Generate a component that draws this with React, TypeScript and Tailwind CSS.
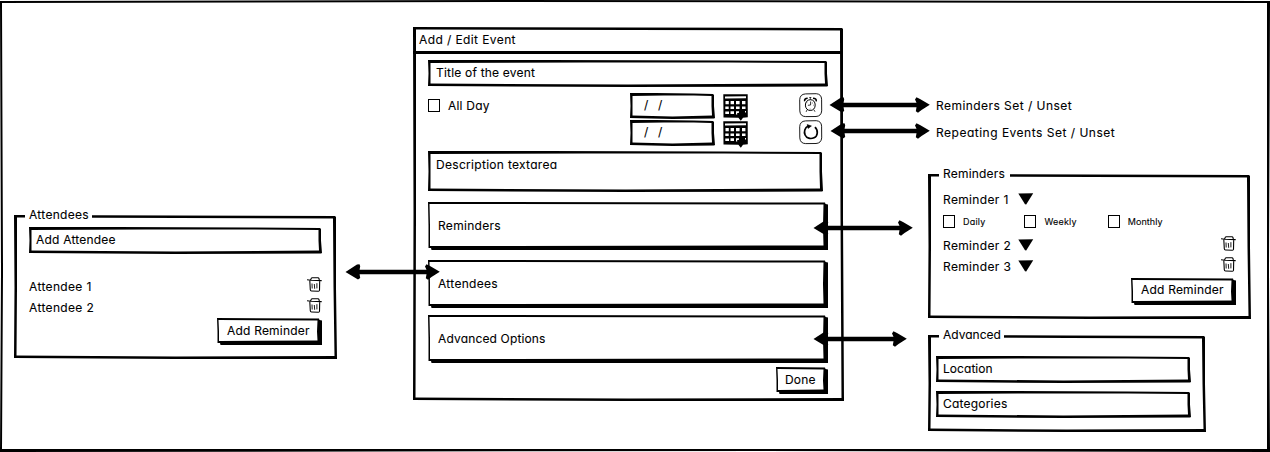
import type { ReactNode } from "react";

const shapes = {
  page: {
    outer: "[clip-path:polygon(0_1px,40%_0,100%_1px,calc(100%_-_1px)_60%,100%_100%,60%_calc(100%_-_1px),0_100%,1px_60%)]",
    inner: "[clip-path:polygon(2px_3px,40%_2px,calc(100%_-_3px)_3px,calc(100%_-_3px)_calc(100%_-_3px),2px_calc(100%_-_3px),3px_60%)]",
  },
  panel: {
    outer: "[clip-path:polygon(0_0,50%_0.5px,calc(100%_-_2px)_1px,calc(100%_-_1px)_2px,calc(100%_-_1px)_50%,100%_100%,50%_100%,0_calc(100%_-_1px),0.5px_50%)]",
    inner: "[clip-path:polygon(3px_2.5px,50%_3px,calc(100%_-_4px)_3.5px,calc(100%_-_3.5px)_50%,calc(100%_-_2.5px)_calc(100%_-_3px),50%_calc(100%_-_2.5px),2.5px_calc(100%_-_3.5px),3px_50%)]",
  },
  field: {
    outer: "[clip-path:polygon(0_0,30%_0,75%_0.5px,calc(100%_-_2px)_1px,calc(100%_-_1px)_2px,calc(100%_-_1px)_50%,100%_calc(100%_-_1px),calc(100%_-_1px)_calc(100%_-_0.5px),50%_100%,0_calc(100%_-_1px),0.5px_50%)]",
    inner: "[clip-path:polygon(2.5px_3px,40%_2.5px,75%_2.5px,calc(100%_-_3.5px)_3px,calc(100%_-_3.5px)_50%,calc(100%_-_3px)_calc(100%_-_3.5px),50%_calc(100%_-_2.5px),2.5px_calc(100%_-_3.5px),2.5px_50%)]",
  },
  button: {
    outer: "[clip-path:polygon(0_0,calc(100%_-_3px)_0.5px,calc(100%_-_2.5px)_2px,100%_2.5px,100%_100%,3.5px_100%,3px_calc(100%_-_2px),0.5px_calc(100%_-_2px),0.5px_50%)]",
    inner: "[clip-path:polygon(1.5px_2px,calc(100%_-_4.5px)_2.5px,calc(100%_-_5px)_50%,calc(100%_-_4.5px)_calc(100%_-_4.5px),2px_calc(100%_-_4px),2px_50%)]",
  },
};

function Frame({ kind, className, children }: { kind: keyof typeof shapes; className: string; children?: ReactNode }) {
  return (
    <div className={`relative shrink-0 ${className}`}>
      <div className={`absolute inset-0 bg-black ${shapes[kind].outer}`}>
        <div className={`size-full bg-white ${shapes[kind].inner}`} />
      </div>
      <div className="relative size-full">{children}</div>
    </div>
  );
}

function Label({ className = "", children }: { className?: string; children: ReactNode }) {
  return <span className={`block whitespace-pre ${className}`}>{children}</span>;
}

function Legend({ className, children }: { className: string; children: ReactNode }) {
  return <div className={`absolute -top-[7px] left-[11px] z-10 bg-white ${className}`}><Label>{children}</Label></div>;
}

function Check({ className = "" }: { className?: string }) {
  return <span className={`block h-[13px] w-3 shrink-0 border-[1.5px] border-black ${className}`} />;
}

function Trash() {
  return (
    <svg className="shrink-0" width="15" height="15" viewBox="0 0 15 15" fill="none" stroke="black" strokeWidth=".9">
      <path d="M0 2.7 4 3.3l10.7.3M3.6 3 4.4 1.1 5.2.7l6 .1.7.6.5 2M2.8 3.5l.5 9.3q.1 1.2 1.2 1.2l6.9.2q1 0 1.1-1l.2-9.4" strokeWidth="1.1" />
      <path d="m5 6.5.2 5M7.3 7l.4 4.8M9.9 6.2v5.2" />
    </svg>
  );
}

function Calendar() {
  return (
    <svg className="block shrink-0" width="26" height="28" viewBox="0 0 26 28">
      <path d="M.3.3 24.7.2l.1 23-4.8.6-2.2 3-2.4-3.1L.5 23.5Z" fill="black" />
      <g fill="white">
        <path d="M2 2.5 23 2.3v2L2 4.5Z" />
        <path d="M2.5 7H5.8v3.2H2.5ZM7.6 7H11v3.2H7.6Zm5.4 0h3.6v3.2H13Zm6 0h3.4v3.2H19ZM2.3 12.4h3.4V15H2.3Zm5.2 0H11V15H7.5Zm5.5 0h3.6V15H13Zm6 0h3.5V15H19ZM2.3 17.4H6v2.7H2.3Zm5.2-.1H11V20H7.5Zm5.5 0h3v1.4l-2 .6.3 1.1H13Zm9-.2h1v1.3h-1Z" />
      </g>
    </svg>
  );
}

function IconBox({ children }: { children: ReactNode }) {
  return (
    <svg className="block shrink-0" width="24" height="25" viewBox="0 0 24 25" fill="none" stroke="black">
      <path d="M6.5.9 17.3.7q5 .4 5.3 5.5l.1 11.7q-.5 5.3-5.7 5.6l-10.3.1Q1.2 23.5.8 17.9L.7 6.7Q1 1.2 6.5.9Z" strokeWidth=".9" />
      {children}
    </svg>
  );
}

function AlarmIcon() {
  return (
    <IconBox>
      <path d="M11.3 6.7c3.1-.1 4.9 2.3 4.9 5.4s-2 5.4-4.9 5.4-4.9-2.3-4.9-5.4 2-5.3 4.9-5.4Z" strokeWidth="1" />
      <path d="m8.1 16.8-1 2.1m7.8-2.1 1.1 1.9M11.3 4.6v2M10.3 4.5h2M11.6 8.5V12l-2.7.3" strokeWidth=".8" />
      <path d="M13.4 9.6v.8m1 1.8h.7m-3.9 3.5v.8m-3.4-7 .6.6" strokeWidth=".7" />
      <path d="M5.7 8.3Q5 5.5 8.7 5.3M14 5.2q3.7.1 3.2 3.2" strokeWidth="1.6" />
    </IconBox>
  );
}

function RepeatIcon() {
  return (
    <IconBox>
      <path d="M15.9 7.2c3.5 3 3.1 8.8-.9 10.6-3.5 1.5-7.5.4-8.9-2.8-1.5-3.3-.3-7.3 3.1-8.9" strokeWidth="1.7" />
      <path d="m8.2 4.6 4.2 1.4-3.3 2.4Z" fill="black" strokeWidth=".6" />
    </IconBox>
  );
}

function Triangle() {
  return (
    <svg className="shrink-0" width="16" height="12" viewBox="0 0 16 12">
      <path d="M.3.5 15.2.2 8.2 11.4 7 11.3Z" fill="black" />
    </svg>
  );
}

function Arrow({ width, className }: { width: number; className: string }) {
  return (
    <svg className={`absolute z-20 ${className}`} width={width} height="18" viewBox={`0 0 ${width} 18`}>
      <path
        d={`M.5 9 12 1.6 14.5 1.2 15.2 3.2 14.6 6.8H${width - 14.5}L${width - 16} 3.5 ${width - 14.5} 1.2 ${width - 11} 3 ${width - 1.2} 8.7 ${width - 9.5} 13.9 ${width - 13} 16.8 ${width - 15.2} 15.3 ${width - 14.5} 11.2H14.6L15.2 15 13 16.4Z`}
        fill="black"
      />
    </svg>
  );
}

function DateRow({ icon }: { icon: ReactNode }) {
  return (
    <div className="flex h-[27px] items-start">
      <Frame kind="field" className="h-[26px] w-[85px]">
        <Label className="pt-[5px] pl-[14px] tracking-[1px]">/  /</Label>
      </Frame>
      <div className="ml-2 pt-px"><Calendar /></div>
      <div className="ml-[50px]">{icon}</div>
    </div>
  );
}

function Field({ className, text }: { className: string; text: ReactNode }) {
  return <Frame kind="field" className={className}><div className="pt-1.5 pl-[7px]">{text}</div></Frame>;
}

export default function App() {
  return (
    <main className="relative h-[452px] w-[1270px] overflow-hidden bg-white font-['Inter',sans-serif] text-[12px] leading-[14px] tracking-[0.2px] text-black [font-feature-settings:'cv11'] [-webkit-text-stroke:0.1px_black]">
      <Frame kind="page" className="h-[452px] w-[1270px]">
        <div className="flex items-start">
          <Frame kind="panel" className="mt-[215px] ml-[14px] h-[144px] w-[323px]">
            <Legend className="w-[67px] pl-1 tracking-[0.3px]">Attendees</Legend>
            <div className="flex flex-col pt-3 pl-[15px]">
              <Field className="h-[27px] w-[293px]" text={<Label>Add Attendee</Label>} />
              <div className="mt-[23px] flex h-[21px] w-[293px] items-start justify-between tracking-[0.35px]">
                <Label className="pt-[3px]">Attendee 1</Label><Trash />
              </div>
              <div className="flex h-5 w-[293px] items-start justify-between tracking-[0.35px]">
                <Label className="pt-[3px]">Attendee 2</Label><Trash />
              </div>
              <Frame kind="button" className="ml-[188px] h-[27px] w-[105px]">
                <Label className="pt-1.5 pl-[10px]">Add Reminder</Label>
              </Frame>
            </div>
          </Frame>

          <Frame kind="panel" className="mt-[27px] ml-[76px] h-[374px] w-[431px]">
            <div className="flex h-[27px] w-[429px] items-start border-b-[3px] border-black pt-1.5 pl-1.5">
              <Label className="tracking-[0.4px]">Add / Edit Event</Label>
            </div>
            <div className="flex flex-col pt-1.5 pl-[15px]">
              <Field className="h-[27px] w-[400px]" text={<Label className="pl-px">Title of the event</Label>} />
              <div className="mt-1.5 flex h-[58px] items-start">
                <Check className="mt-1.5" />
                <Label className="mt-1.5 ml-2">All Day</Label>
                <div className="ml-auto flex w-[214px] flex-col">
                  <DateRow icon={<AlarmIcon />} />
                  <DateRow icon={<RepeatIcon />} />
                </div>
              </div>
              <Field className="h-[41px] w-[395px]" text={<Label className="pt-px pl-px tracking-[0.3px]">Description textarea</Label>} />
              <Frame kind="button" className="mt-2.5 h-12 w-[400px]"><Label className="pt-[17px] pl-[10px] tracking-[0.3px]">Reminders</Label></Frame>
              <Frame kind="button" className="mt-2.5 h-12 w-[400px]"><Label className="pt-[17px] pl-[10px] tracking-[0.3px]">Attendees</Label></Frame>
              <Frame kind="button" className="mt-[7px] h-12 w-[400px]"><Label className="pt-[17px] pl-[10px] tracking-[0.15px]">Advanced Options</Label></Frame>
              <Frame kind="button" className="mt-1 ml-[348px] h-[27px] w-[52px]"><Label className="pt-1.5 pl-[9px]">Done</Label></Frame>
            </div>
          </Frame>

          <div className="ml-[84px] flex flex-col">
            <Label className="mt-[99px] ml-2 tracking-[0.45px]">Reminders Set / Unset</Label>
            <Label className="mt-[13px] ml-2 tracking-[0.5px]">Repeating Events Set / Unset</Label>
            <Frame kind="panel" className="mt-[34px] h-[145px] w-[323px]">
              <Legend className="w-[71px] pl-1">Reminders</Legend>
              <div className="flex flex-col pt-[19px] pl-[15px]">
                <div className="flex h-[21px] items-start"><Label className="w-[75px] tracking-[0.35px]">Reminder 1</Label><Triangle /></div>
                <div className="flex h-[25px] items-start pt-px text-[9px]">
                  <Check /><Label className="ml-2">Daily</Label>
                  <Check className="ml-[39px]" /><Label className="ml-2">Weekly</Label>
                  <Check className="ml-[31px]" /><Label className="ml-2 tracking-[0.05px]">Monthly</Label>
                </div>
                <div className="flex h-[21px] items-start"><Label className="w-[75px] tracking-[0.35px]">Reminder 2</Label><Triangle /><div className="-mt-[3px] ml-[187px]"><Trash /></div></div>
                <div className="flex h-[18px] items-start"><Label className="w-[75px] tracking-[0.35px]">Reminder 3</Label><Triangle /><div className="-mt-[3px] ml-[187px]"><Trash /></div></div>
                <Frame kind="button" className="ml-[188px] h-[27px] w-[105px]">
                  <Label className="pt-[5px] pl-[10px]">Add Reminder</Label>
                </Frame>
              </div>
            </Frame>
            <Frame kind="panel" className="mt-4 h-[97px] w-[278px]">
              <Legend className="w-[65px] pl-1 tracking-[0px]">Advanced</Legend>
              <div className="flex flex-col gap-2 pt-[21px] pl-2">
                <Field className="h-[27px] w-[255px]" text={<Label className="tracking-[0.05px]">Location</Label>} />
                <Field className="h-[27px] w-[255px]" text={<Label>Categories</Label>} />
              </div>
            </Frame>
          </div>
        </div>
      </Frame>
      <Arrow width={102} className="top-[96px] left-[829px]" />
      <Arrow width={101} className="top-[122px] left-[830px]" />
      <Arrow width={96} className="top-[263px] left-[345px]" />
      <Arrow width={101} className="top-[219px] left-[813px]" />
      <Arrow width={95} className="top-[330px] left-[813px]" />
    </main>
  );
}
